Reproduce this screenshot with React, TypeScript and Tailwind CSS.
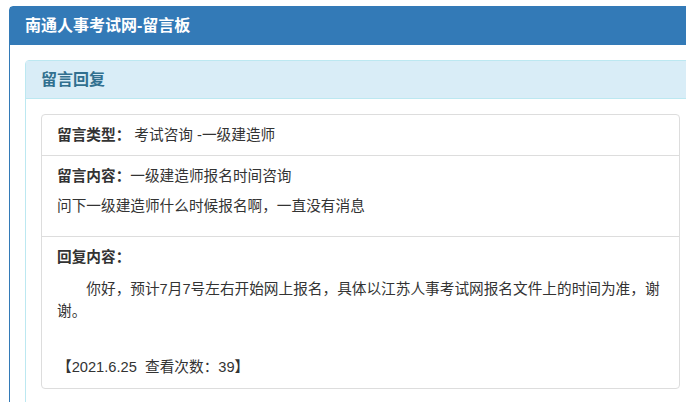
import React from "react";

export default function App() {
  return (
    <div
      className="w-[686px] h-[402px] overflow-hidden bg-white text-[#333]"
      style={{ fontFamily: '"Liberation Sans", "Noto Sans CJK SC", sans-serif' }}
    >
      <div className="ml-[9px] mt-[6px] w-[703px] rounded-t-[4px] border border-[#337ab7] bg-white">
        <div className="flex h-[38px] items-center bg-[#337ab7] px-[15px]">
          <h3 className="text-[16px] font-bold leading-none text-white">南通人事考试网-留言板</h3>
        </div>
        <div className="p-[15px]">
          <div className="rounded-t-[4px] border border-[#bce8f1] bg-white">
            <div className="flex h-[38px] items-center border-b border-[#bce8f1] bg-[#d9edf7] px-[15px]">
              <h4 className="text-[16px] font-bold leading-none text-[#31708f]">留言回复</h4>
            </div>
            <div className="p-[15px]">
              <div className="w-[639px] rounded-[4px] border border-[#ddd] text-[14.667px]">
                <div className="px-[15px] py-[10px] leading-[20px]">
                  <span className="font-bold">留言类型：</span> 考试咨询 -一级建造师
                </div>
                <div className="border-t border-[#ddd] px-[15px] pt-[10px] pb-[19px]">
                  <div className="leading-[20px]">
                    <span className="font-bold">留言内容：</span>一级建造师报名时间咨询
                  </div>
                  <p className="mt-[9px] leading-[22px]">问下一级建造师什么时候报名啊，一直没有消息</p>
                </div>
                <div className="border-t border-[#ddd] px-[15px] pt-[10px] pb-[10px]">
                  <div className="leading-[20px] font-bold">回复内容：</div>
                  <p className="mt-[11px] indent-[2em] leading-[22px]">
                    你好，预计7月7号左右开始网上报名，具体以江苏人事考试网报名文件上的时间为准，谢谢。
                  </p>
                  <p className="mt-[34px] leading-[22px]">【2021.6.25&nbsp;&nbsp;查看次数：39】</p>
                </div>
              </div>
            </div>
          </div>
        </div>
      </div>
    </div>
  );
}
